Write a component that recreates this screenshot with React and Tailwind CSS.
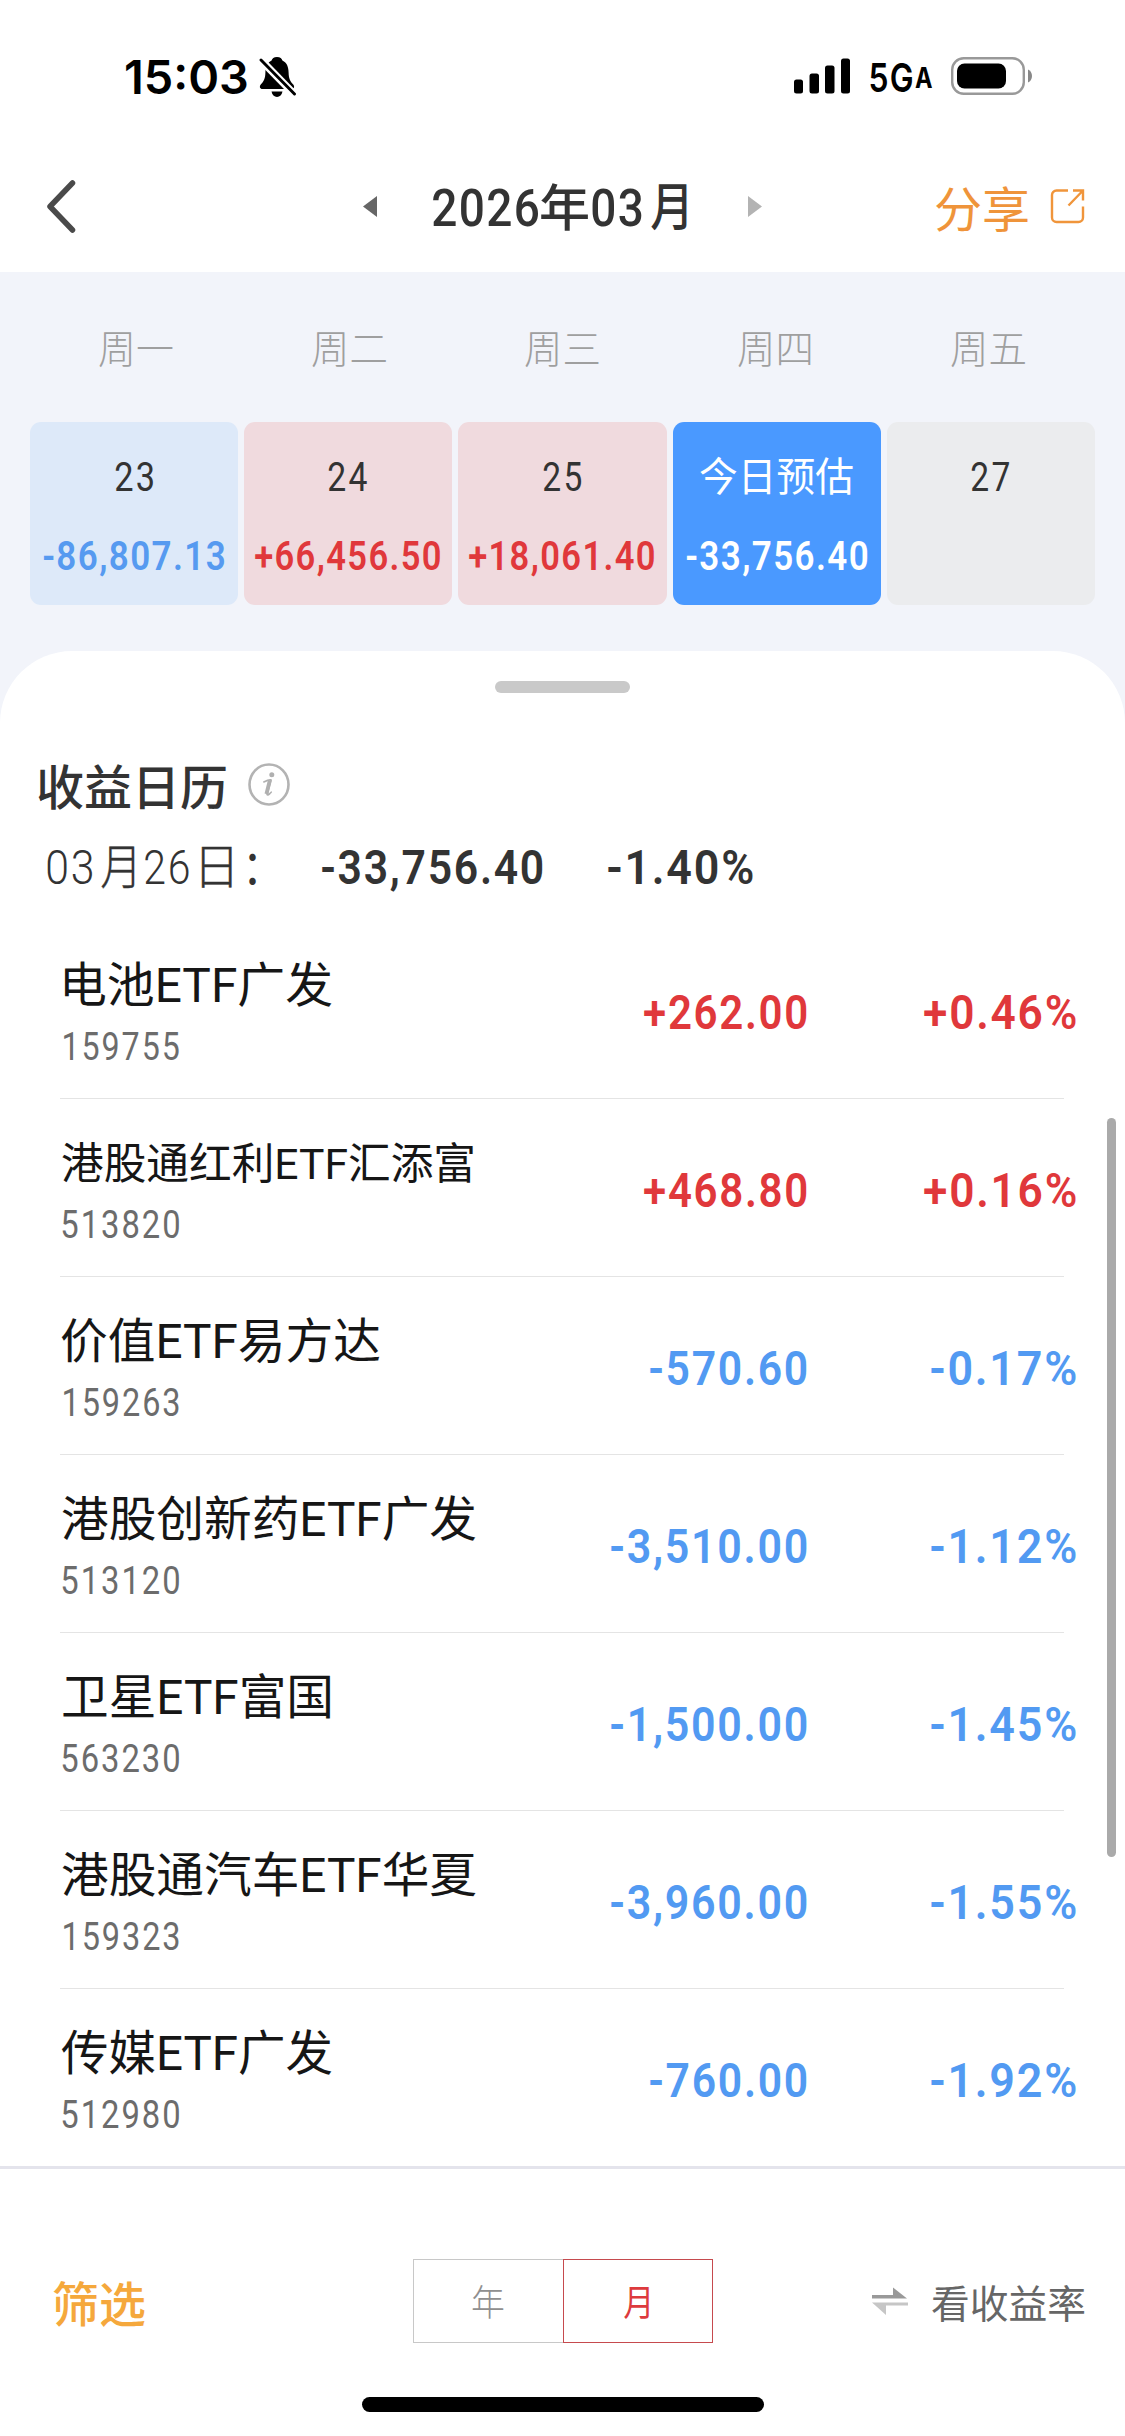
import { useLayoutEffect, useRef } from "react";

// Text whose visible glyphs fill exactly `w` pixels horizontally.
function Fit({ w, className = "", children }) {
  const ref = useRef(null);
  useLayoutEffect(() => {
    const el = ref.current;
    const cs = getComputedStyle(el);
    const ctx = document.createElement("canvas").getContext("2d");
    ctx.font = `${cs.fontStyle} ${cs.fontWeight} ${cs.fontSize} ${cs.fontFamily}`;
    const m = ctx.measureText(el.textContent);
    const tracking = (parseFloat(cs.letterSpacing) || 0) * (el.textContent.length - 1);
    const s = w / (m.actualBoundingBoxRight + m.actualBoundingBoxLeft + tracking);
    el.style.transform = `translateX(${m.actualBoundingBoxLeft * s}px) scaleX(${s})`;
  }, [w, children]);
  return (
    <span className="block shrink-0" style={{ width: w }}>
      <span ref={ref} className={`inline-block origin-left align-top whitespace-nowrap ${className}`}>
        {children}
      </span>
    </span>
  );
}

const DAYS = [
  { label: "周一", w: 74 },
  { label: "周二", w: 74 },
  { label: "周三", w: 74 },
  { label: "周四", w: 73 },
  { label: "周五", w: 74 },
];

const CELLS = [
  { day: "23", dw: 38, amount: "-86,807.13", aw: 181, bg: "bg-[#dde9f9]", top: "text-[#333333]", color: "text-[#569af0]" },
  { day: "24", dw: 39, amount: "+66,456.50", aw: 185, bg: "bg-[#f0dade]", top: "text-[#333333]", color: "text-[#e0383b]" },
  { day: "25", dw: 38, amount: "+18,061.40", aw: 185, bg: "bg-[#f0dade]", top: "text-[#333333]", color: "text-[#e0383b]" },
  { day: "今日预估", dw: 153, amount: "-33,756.40", aw: 181, bg: "bg-[#4a99ff]", top: "text-white", color: "text-white" },
  { day: "27", dw: 38, bg: "bg-[#ebecee]", top: "text-[#333333]" },
];

const FUNDS = [
  { name: "电池ETF广发", nw: 267, nx: "ml-[5px]", code: "159755", cw: 115, amount: "+262.00", aw: 163, pct: "+0.46%", pw: 152 },
  { name: "港股通红利ETF汇添富", nw: 411, nx: "ml-[2px]", small: true, code: "513820", cw: 117, amount: "+468.80", aw: 163, pct: "+0.16%", pw: 152 },
  { name: "价值ETF易方达", nw: 319, nx: "ml-[1px]", code: "159263", cw: 115, amount: "-570.60", aw: 157, pct: "-0.17%", pw: 145 },
  { name: "港股创新药ETF广发", nw: 414, nx: "ml-[2px]", code: "513120", cw: 117, amount: "-3,510.00", aw: 196, pct: "-1.12%", pw: 145 },
  { name: "卫星ETF富国", nw: 267, nx: "ml-[3px]", code: "563230", cw: 117, amount: "-1,500.00", aw: 196, pct: "-1.45%", pw: 145 },
  { name: "港股通汽车ETF华夏", nw: 414, nx: "ml-[2px]", code: "159323", cw: 115, amount: "-3,960.00", aw: 196, pct: "-1.55%", pw: 145 },
  { name: "传媒ETF广发", nw: 271, nx: "ml-[1px]", code: "512980", cw: 117, amount: "-760.00", aw: 157, pct: "-1.92%", pw: 145 },
];

function StatusBar() {
  return (
    <div className="flex h-[154px] items-center pl-[126px] font-['Inter',sans-serif] text-black">
      <Fit w={121} className="text-[47px] leading-[48px] font-semibold">15:03</Fit>
      <svg className="ml-3 h-[42px] w-[38px] shrink-0" viewBox="0 0 38 42">
        <path d="M18 1c-3.200 0-5 1.800-5.400 3.400C8 6.500 6.500 11 6.400 16.500 6.300 23 4.500 25.500 2 28.200 0 30.400.800 33 3.500 33h29c2.700 0 3.500-2.600 1.500-4.800-2.500-2.700-4.300-5.200-4.400-11.700C29.500 11 28 6.500 23.400 4.400 23 2.800 21.200 1 18 1z" fill="#000" />
        <path d="M12.500 35.500h11c-.600 3.300-2.700 5.500-5.500 5.500s-4.900-2.200-5.500-5.500z" fill="#000" />
        <path d="M0 2l36 37" stroke="#fff" strokeWidth="7.500" />
        <path d="M2 4l33.500 34" stroke="#000" strokeWidth="2.900" strokeLinecap="round" />
      </svg>
      <svg className="-mt-[2px] ml-[497px] h-9 w-[57px] shrink-0" viewBox="0 0 57 36">
        <rect x="0" y="21.500" width="9" height="14" rx="2.500" />
        <rect x="15.500" y="15.500" width="9.500" height="20" rx="2.500" />
        <rect x="31" y="7.500" width="9.500" height="28" rx="2.500" />
        <rect x="47" y="0.500" width="9" height="35" rx="2.500" />
      </svg>
      <div className="ml-[19px] flex items-baseline gap-[3px] pt-[2px]">
        <Fit w={42} className="text-[40px] leading-[40px] font-semibold tracking-[0.04em]">5G</Fit>
        <Fit w={17} className="text-[29px] leading-[40px] font-bold">A</Fit>
      </div>
      <svg className="-mt-[2px] ml-[19px] h-[38px] w-[82px] shrink-0" viewBox="0 0 82 38">
        <rect x="1.200" y="1.200" width="71.600" height="35.600" rx="11.500" fill="none" stroke="#999" strokeWidth="2.400" />
        <rect x="6" y="6.500" width="49" height="25" rx="7.500" />
        <path d="M77 12.500c2.500 1.200 4 3.600 4 6.500s-1.500 5.300-4 6.500z" fill="#888" />
      </svg>
    </div>
  );
}

function NavBar() {
  return (
    <div className="flex h-[118px] items-center pb-[13px] pl-[46px] text-[#333333]">
      <svg className="h-[54px] w-[30px] shrink-0" viewBox="0 0 30 54" fill="none" stroke="#4a4a4a" strokeWidth="5.500" strokeLinecap="round" strokeLinejoin="round">
        <path d="M26.500 3L4 26.500 26.500 50" />
      </svg>
      <svg className="ml-[287px] h-[21px] w-[14px] shrink-0" viewBox="0 0 14 21">
        <path d="M14 0v21L0 10.500z" fill="#666" />
      </svg>
      <div className="ml-[56px] flex items-center pt-[5px] text-[51px] leading-[56px] font-medium">
        <Fit w={105} className="tracking-[0.03em]">2026</Fit>
        <span className="w-[3px]" />
        <Fit w={47} className="text-[50px]">年</Fit>
        <span className="w-[4px]" />
        <Fit w={50} className="tracking-[0.03em]">03</Fit>
        <span className="w-[9px]" />
        <Fit w={36} className="text-[52px]">月</Fit>
      </div>
      <svg className="ml-[61px] h-[21px] w-[14px] shrink-0" viewBox="0 0 14 21">
        <path d="M0 0v21l14-10.500z" fill="#b3b3b3" />
      </svg>
      <div className="ml-[174px] pt-[8px] text-[48px] leading-[50px] text-[#ef943a]">
        <Fit w={92}>分享</Fit>
      </div>
      <svg className="ml-[22px] h-[35px] w-[35px] shrink-0" viewBox="0 0 34 35" fill="none" stroke="#f0953b" strokeWidth="2.400">
        <path d="M17.500 1.500H6a4.500 4.500 0 0 0-4.500 4.500v22.500A4.500 4.500 0 0 0 6 33h22a4.500 4.500 0 0 0 4.500-4.500V17.500" />
        <path d="M22.500 1.500h10v10M32.500 1.500L18 16.500" />
      </svg>
    </div>
  );
}

function Week() {
  return (
    <div className="h-[379px] bg-[#f2f4fa] pt-[54px]">
      <div className="ml-[29px] grid w-[1065px] grid-cols-5">
        {DAYS.map((d) => (
          <div key={d.label} className="flex justify-center text-[39px] leading-[48px] font-light text-[#9f9f9f]">
            <Fit w={d.w}>{d.label}</Fit>
          </div>
        ))}
      </div>
      <div className="mx-[30px] mt-[48px] grid grid-cols-5 gap-[6px]">
        {CELLS.map((c) => (
          <div key={c.day} className={`flex h-[183px] flex-col items-center rounded-[11px] pt-[35px] pr-[1px] ${c.bg}`}>
            <div className={`text-[40px] leading-[40px] ${c.top}`}>
              <Fit w={c.dw} className={c.dw > 100 ? "pt-[1px]" : "pt-[1px] tracking-[0.07em]"}>{c.day}</Fit>
            </div>
            {c.amount && (
              <div className={`mt-[39px] text-[40px] leading-[40px] font-semibold ${c.color}`}>
                <Fit w={c.aw} className="tracking-[0.04em]">{c.amount}</Fit>
              </div>
            )}
          </div>
        ))}
      </div>
    </div>
  );
}

function Fund({ f, last }) {
  const color = f.amount[0] === "+" ? "text-[#e0383b]" : "text-[#529af2]";
  return (
    <div className={`ml-[60px] flex w-[1004px] justify-between ${last ? "h-[175px]" : "h-[178px] border-b border-[#e4e4e4]"}`}>
      <div className="pt-[41px]">
        <div className={`leading-[48px] text-[#161616] ${f.nx} ${f.small ? "text-[43px]" : "text-[48px]"}`}>
          <Fit w={f.nw}>{f.name}</Fit>
        </div>
        <div className={`mt-[17px] text-[39px] leading-[40px] text-[#6c6c6c] ${f.cw === 115 ? "ml-[4px]" : "ml-[2px]"}`}>
          <Fit w={f.cw} className="font-normal tracking-[0.06em]">{f.code}</Fit>
        </div>
      </div>
      <div className={`-mr-[12px] flex pt-[67px] text-[48px] leading-[50px] font-semibold ${color}`}>
        <Fit w={f.aw} className="tracking-[0.04em]">{f.amount}</Fit>
        <div className="flex w-[269px] justify-end">
          <Fit w={f.pw} className="tracking-[0.04em]">{f.pct}</Fit>
        </div>
      </div>
    </div>
  );
}

function Sheet() {
  return (
    <div className="relative h-[1515px] bg-[#f2f4fa]">
      <div className="h-full rounded-t-[72px] bg-white pt-[30px]">
        <div className="mx-auto h-[12px] w-[135px] rounded-full bg-[#c9c9c9]" />
        <div className="flex items-start pt-[70px] pl-[38px] text-[#333333]">
          <div className="pt-[1px] text-[48px] leading-[50px] font-medium">
            <Fit w={188}>收益日历</Fit>
          </div>
          <svg className="ml-[22px] h-[43px] w-[42px]" viewBox="0 0 42 43">
            <ellipse cx="21" cy="21.500" rx="19.500" ry="20" fill="none" stroke="#b3b3b3" strokeWidth="2.600" />
            <circle cx="23.800" cy="11.700" r="2.500" fill="#b0b0b0" />
            <path d="M15.800 19c3-1.500 5.300-2.300 6.700-2.100M23.200 17l-3.600 13.500c-.5 2 .9 1.500 3.600-1.300M19 31.500c.4 1 1.600.5 2.600-.5" fill="none" stroke="#b0b0b0" strokeWidth="1.600" strokeLinecap="round" />
            <path d="M21.700 17.500L18.300 31" stroke="#b0b0b0" strokeWidth="3.600" />
          </svg>
        </div>
        <div className="mt-[29px] flex pl-[47px] text-[48px] leading-[50px] text-[#333333]">
          <Fit w={45} className="font-light tracking-[0.04em]">03</Fit>
          <span className="w-[9px]" />
          <Fit w={33} className="font-light [-webkit-text-stroke:0.4px_#333333]">月</Fit>
          <span className="w-[11px]" />
          <Fit w={44} className="font-light tracking-[0.04em]">26</Fit>
          <span className="w-[13px]" />
          <Fit w={30} className="font-light [-webkit-text-stroke:0.4px_#333333]">日</Fit>
          <span className="w-[17px]" />
          <Fit w={7}>：</Fit>
          <span className="w-[66px]" />
          <Fit w={221} className="font-semibold tracking-[0.04em]">-33,756.40</Fit>
          <span className="w-[65px]" />
          <Fit w={145} className="font-semibold tracking-[0.04em]">-1.40%</Fit>
        </div>
        <div className="mt-[28px]">
          {FUNDS.map((f, i) => (
            <Fund key={f.code} f={f} last={i === FUNDS.length - 1} />
          ))}
        </div>
      </div>
      <div className="absolute top-[467px] right-[9px] h-[739px] w-[9px] rounded-full bg-[#aaaaaa]" />
    </div>
  );
}

function BottomBar() {
  return (
    <div className="h-[270px] border-t-[3px] border-[#e4e4ec] bg-white pt-[90px]">
      <div className="flex items-center pl-[53px]">
        <div className="pt-[9px] text-[48px] leading-[50px] font-medium text-[#f5a83c]">
          <Fit w={92}>筛选</Fit>
        </div>
        <div className="ml-[268px] flex h-[84px] text-[36px] leading-[40px]">
          <div className="flex w-[150px] items-center justify-center border border-r-0 border-[#c8c8c8] pt-[6px] pr-[2px] text-[#8f8f8f]">
            <Fit w={32} className="font-light">年</Fit>
          </div>
          <div className="flex w-[150px] items-center justify-center border border-[#c64a4e] pt-[6px] pr-[3px] text-[#dd3a3d]">
            <Fit w={25}>月</Fit>
          </div>
        </div>
        <svg className="ml-[159px] h-[28px] w-[36px]" viewBox="0 0 36 28">
          <path d="M0 8h21V0.500l14 11H0z" fill="#999" />
          <path d="M0 15.500h36v3H14V28z" fill="#c6c6c6" />
        </svg>
        <div className="ml-[24px] pt-[7px] text-[39px] leading-[44px] text-[#666666]">
          <Fit w={153}>看收益率</Fit>
        </div>
      </div>
      <div className="mx-auto mt-[54px] h-[15px] w-[402px] rounded-full bg-black" />
    </div>
  );
}

export default function App() {
  return (
    <div className="h-[2436px] w-[1125px] overflow-hidden bg-white font-['Roboto','Noto_Sans_CJK_SC',sans-serif]">
      <StatusBar />
      <NavBar />
      <Week />
      <Sheet />
      <BottomBar />
    </div>
  );
}
